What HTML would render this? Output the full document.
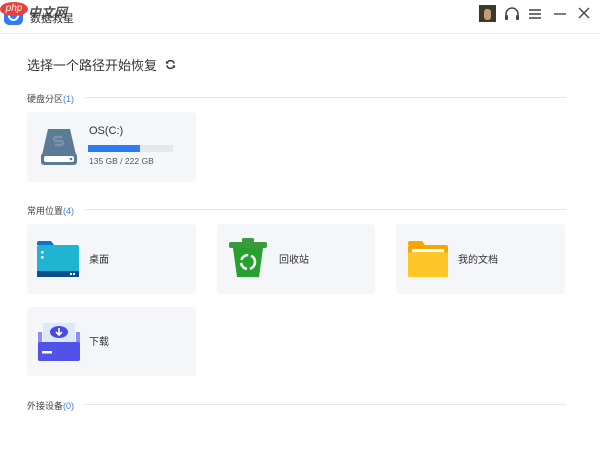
<!DOCTYPE html>
<html><head><meta charset="utf-8"><style>
*{margin:0;padding:0;box-sizing:border-box}
body{width:600px;height:461px;background:#fff;font-family:"Liberation Sans","Noto Sans CJK SC",sans-serif;position:relative;overflow:hidden;color:#333}
.a{position:absolute}
.card{position:absolute;background:#f5f6fa;border-radius:4px}
.sec{position:absolute;left:27px;font-size:9px;color:#444}
.sec b{font-weight:normal;color:#3b7bf0}
.line{position:absolute;height:1px;background:#e8e8e8}
.lbl{position:absolute;font-size:10px;color:#333}
</style></head><body>
<div class="line" style="left:0;top:33px;width:600px;background:#eee"></div>
<!-- logo -->
<div class="a" style="left:4px;top:6px;width:19px;height:19px;border-radius:5px;background:#2f7bf2"></div>
<div class="a" style="left:8px;top:10px;width:11px;height:11px;border-radius:50%;border:2px solid #fff;border-top-color:transparent"></div>
<div class="a" style="left:0;top:2px;width:28px;height:14px;border-radius:50%;background:#e8403a;color:#fff;font-size:10px;font-style:italic;text-align:center;line-height:14px">php</div>
<div class="a" style="left:28px;top:2px;font-size:13px;color:#333;font-weight:bold;font-style:italic;opacity:.85">中文网</div>
<div class="a" style="left:30px;top:10px;font-size:11px;color:#333">数据救星</div>
<!-- top right -->
<div class="a" style="left:479px;top:5px;width:17px;height:17px;background:#3a3a2a"></div>
<div class="a" style="left:484px;top:9px;width:7px;height:11px;background:#c99a78;border-radius:3px"></div>
<svg class="a" style="left:503px;top:6px" width="18" height="16" viewBox="0 0 18 16"><path d="M3 10V8a6 6 0 0 1 12 0v2" fill="none" stroke="#444" stroke-width="1.5"/><rect x="2" y="9" width="3" height="5" rx="1" fill="#444"/><rect x="13" y="9" width="3" height="5" rx="1" fill="#444"/></svg>
<svg class="a" style="left:528px;top:8px" width="14" height="12"><path d="M1 2h12M1 6h12M1 10h12" stroke="#444" stroke-width="1.4"/></svg>
<svg class="a" style="left:553px;top:8px" width="14" height="12"><path d="M1 6h12" stroke="#444" stroke-width="1.4"/></svg>
<svg class="a" style="left:578px;top:7px" width="12" height="12"><path d="M1 1l10 10M11 1L1 11" stroke="#444" stroke-width="1.4"/></svg>
<!-- title -->
<div class="a" style="left:27px;top:55px;font-size:13px;color:#333">选择一个路径开始恢复</div>
<svg class="a" style="left:165px;top:59px" width="11" height="11" viewBox="0 0 12 12"><path d="M10 5A4 4 0 0 0 2.5 4M2 7a4 4 0 0 0 7.5 1" fill="none" stroke="#333" stroke-width="1.6"/><path d="M1 2v3h3zM11 10V7H8z" fill="#333"/></svg>
<div class="sec" style="top:92px">硬盘分区<b>(1)</b></div>
<div class="line" style="left:84px;top:97px;width:482px"></div>
<div class="card" style="left:27px;top:112px;width:169px;height:70px"></div>
<svg class="a" style="left:40px;top:127px" width="38" height="40" viewBox="0 0 38 40"><path d="M8 2h22l6 26H2z" fill="#5b7a96"/><rect x="1" y="26" width="36" height="12" rx="3" fill="#5b7a96"/><rect x="4" y="29" width="30" height="6" rx="2" fill="#fff"/><circle cx="31" cy="32" r="1.3" fill="#2f7bf2"/><path d="M22 10h-6a2 2 0 0 0 0 4h5a2 2 0 0 1 0 4h-6" fill="none" stroke="#7992aa" stroke-width="2.5"/></svg>
<div class="lbl" style="left:89px;top:125px;font-size:11px">OS(C:)</div>
<div class="a" style="left:88px;top:145px;width:85px;height:7px;background:#e4e7ee"></div>
<div class="a" style="left:88px;top:145px;width:52px;height:7px;background:#2f7bf2"></div>
<div class="lbl" style="left:89px;top:156px;font-size:8.5px;color:#555">135 GB / 222 GB</div>
<div class="sec" style="top:204px">常用位置<b>(4)</b></div>
<div class="line" style="left:84px;top:209px;width:482px"></div>
<div class="card" style="left:27px;top:224px;width:169px;height:70px"></div>
<div class="card" style="left:217px;top:224px;width:158px;height:70px"></div>
<div class="card" style="left:396px;top:224px;width:169px;height:70px"></div>
<svg class="a" style="left:37px;top:241px" width="42" height="36" viewBox="0 0 42 36"><path d="M0 2a2 2 0 0 1 2-2h12l3 4H0z" fill="#1670c9"/><rect x="0" y="4" width="42" height="32" rx="2" fill="#1fb4d2"/><rect x="0" y="30" width="42" height="6" fill="#0c4d8e"/><rect x="4" y="10" width="2.5" height="2.5" fill="#fff"/><rect x="4" y="15" width="2.5" height="2.5" fill="#fff"/><rect x="33" y="32" width="2" height="2" fill="#fff"/><rect x="36" y="32" width="2" height="2" fill="#fff"/></svg>
<div class="lbl" style="left:89px;top:251px">桌面</div>
<svg class="a" style="left:229px;top:238px" width="38" height="40" viewBox="0 0 38 40"><rect x="0" y="4" width="38" height="6" rx="2" fill="#3a9a3a"/><rect x="13" y="0" width="12" height="5" rx="1.5" fill="#3a9a3a"/><path d="M4 10h30l-4 29H8z" fill="#26a12e"/><circle cx="19" cy="24" r="7" fill="none" stroke="#fff" stroke-width="2.5" stroke-dasharray="9 3"/></svg>
<div class="lbl" style="left:279px;top:251px">回收站</div>
<svg class="a" style="left:408px;top:241px" width="40" height="36" viewBox="0 0 40 36"><path d="M0 2a2 2 0 0 1 2-2h12l3 4H0z" fill="#f7a500"/><rect x="0" y="4" width="40" height="32" rx="2" fill="#f7a500"/><rect x="4" y="8" width="32" height="4" fill="#fff"/><rect x="0" y="11" width="40" height="25" rx="2" fill="#ffc627"/></svg>
<div class="lbl" style="left:458px;top:251px">我的文档</div>
<div class="card" style="left:27px;top:307px;width:169px;height:69px"></div>
<svg class="a" style="left:38px;top:322px" width="42" height="40" viewBox="0 0 42 40"><rect x="5" y="1" width="32" height="20" fill="#dce9fb"/><path d="M0 10h4v10h34V10h4v27a2 2 0 0 1-2 2H2a2 2 0 0 1-2-2z" fill="#8e8ef5"/><rect x="0" y="20" width="42" height="19" rx="2" fill="#5252e8"/><rect x="4" y="29" width="10" height="2.5" fill="#fff"/><ellipse cx="21" cy="10" rx="9" ry="6" fill="#4a4ae0"/><path d="M21 6v6M18 10l3 3 3-3" stroke="#fff" stroke-width="1.6" fill="none"/></svg>
<div class="lbl" style="left:89px;top:333px">下载</div>
<div class="sec" style="top:399px">外接设备<b>(0)</b></div>
<div class="line" style="left:84px;top:404px;width:482px"></div>
</body></html>
